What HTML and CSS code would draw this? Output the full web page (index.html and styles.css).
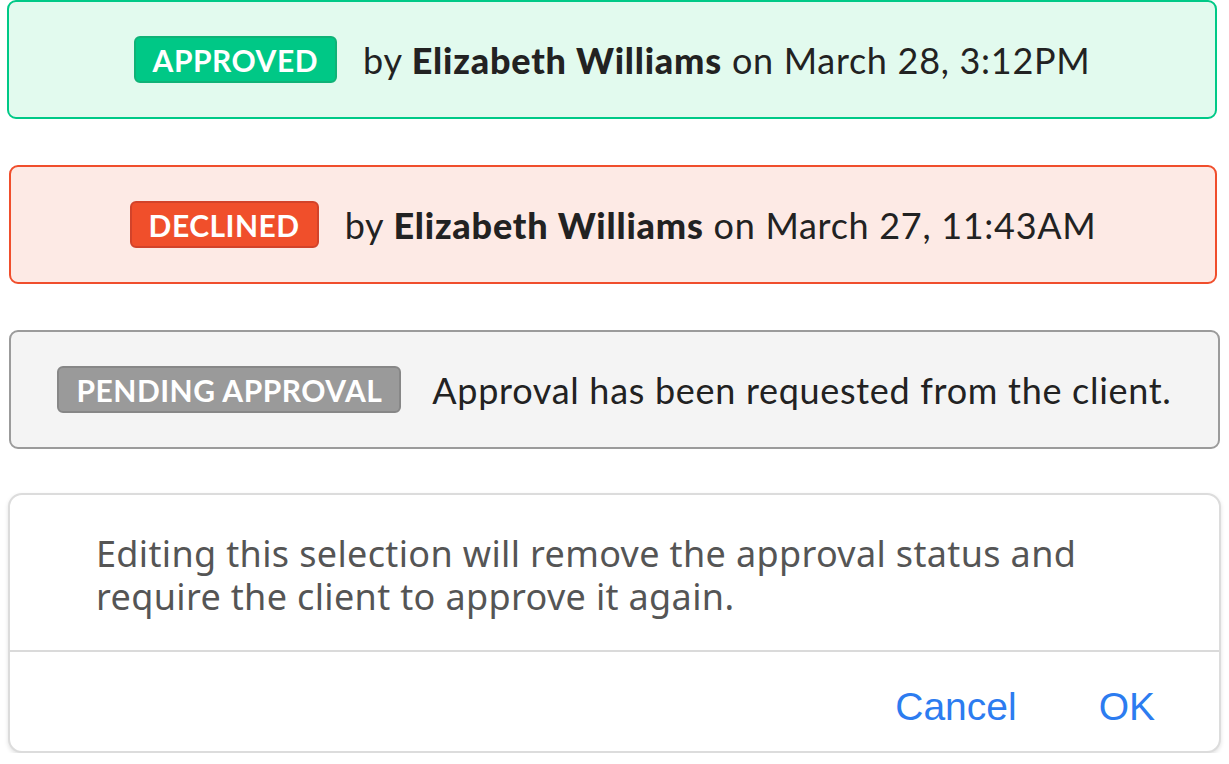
FILE: index.html
```html
<!DOCTYPE html>
<html>
<head>
<meta charset="utf-8">
<link rel="stylesheet" href="styles.css">
</head>
<body>
<div class="page">
  <div class="status status-approved">
    <span class="badge badge-approved">APPROVED</span>
    <span class="msg">by <b>Elizabeth Williams</b> on March 28, 3:12PM</span>
  </div>
  <div class="status status-declined">
    <span class="badge badge-declined">DECLINED</span>
    <span class="msg">by <b>Elizabeth Williams</b> on March 27, 11:43AM</span>
  </div>
  <div class="status status-pending">
    <span class="badge badge-pending">PENDING APPROVAL</span>
    <span class="msg">Approval has been requested from the client.</span>
  </div>
  <div class="dialog">
    <div class="dialog-body">Editing this selection will remove the approval status and require the client to approve it again.</div>
    <div class="dialog-actions">
      <span class="btn">Cancel</span>
      <span class="btn">OK</span>
    </div>
  </div>
</div>
</body>
</html>
```

FILE: styles.css
```css
html, body { margin: 0; padding: 0; background: #fff; }
.page {
  display: flex;
  flex-direction: column;
  font-family: Lato, "Noto Sans", sans-serif;
  color: #222;
}
.status {
  box-sizing: border-box;
  height: 119px;
  border: 2px solid;
  border-radius: 9px;
  display: flex;
  align-items: center;
  justify-content: center;
  gap: 26px;
}
.status-approved { margin: 0 12px 0 7px; border-color: #00c987; background: #e2faee; }
.status-declined { margin: 46px 12px 0 9px; border-color: #f04e2c; background: #fdeae5; }
.status-pending { margin: 46px 9px 0 9px; border-color: #9b9b9b; background: #f4f4f4; gap: 31px; }
.badge {
  box-sizing: border-box;
  height: 47px;
  display: inline-flex;
  align-items: center;
  padding: 0 17px;
  border-radius: 6px;
  border: 2px solid;
  color: #fff;
  font-weight: 700;
  font-size: 30px;
  letter-spacing: 0.5px;
}
.badge-approved { background: #00c886; border-color: #10b277; }
.badge-declined { background: #f04f2b; border-color: #d2432a; }
.badge-pending { background: #9a9a9a; border-color: #878787; }
.msg { font-size: 36px; letter-spacing: 0.7px; }
.msg b { font-weight: 900; letter-spacing: 0.8px; }
.dialog {
  margin: 44px 8px 0 8px;
  box-sizing: border-box;
  height: 260px;
  border: 2px solid #dcdcdc;
  border-radius: 14px;
  box-shadow: 0 2px 4px rgba(0,0,0,0.12);
  background: #fff;
  display: flex;
  flex-direction: column;
}
.dialog-body {
  height: 157px;
  box-sizing: border-box;
  padding: 37px 120px 0 86px;
  border-bottom: 2px solid #dadada;
  font-family: "Noto Sans", "Open Sans", sans-serif;
  font-size: 36px;
  line-height: 43px;
  letter-spacing: 0.35px;
  color: #555;
}
.dialog-actions {
  flex: 1;
  display: flex;
  justify-content: flex-end;
  align-items: center;
  gap: 82px;
  padding: 10px 64px 0 0;
}
.btn {
  font-family: "Liberation Sans", Arial, sans-serif;
  font-size: 39px;
  color: #2c7cf0;
}
```
